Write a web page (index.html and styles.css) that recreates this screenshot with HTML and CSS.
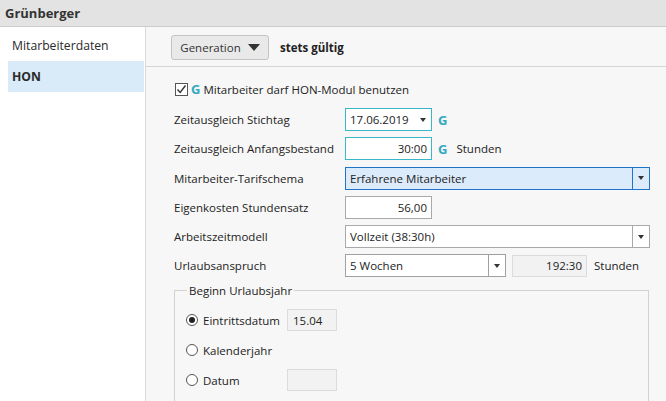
FILE: index.html
```html
<!DOCTYPE html>
<html lang="de">
<head>
<meta charset="utf-8">
<title>Grünberger</title>
<link rel="stylesheet" href="styles.css">
</head>
<body>
<div class="titlebar">Grünberger</div>
<div class="main">
  <nav class="sidebar">
    <div class="nav-item">Mitarbeiterdaten</div>
    <div class="nav-item active">HON</div>
  </nav>
  <section class="content">
    <div class="toolbar">
      <button class="gen-btn">Generation <span class="tri-big"></span></button>
      <span class="validity">stets gültig</span>
    </div>
    <div class="form">
      <div class="check-row">
        <span class="checkbox"><svg width="11" height="11" viewBox="0 0 11 11"><path d="M1.5 5.5 L4.2 8.5 L9.5 1.5" fill="none" stroke="#333" stroke-width="1.4"/></svg></span>
        <span class="g">G</span>
        <span>Mitarbeiter darf HON-Modul benutzen</span>
      </div>
      <div class="grid">
        <label class="lbl">Zeitausgleich Stichtag</label>
        <div class="ctl">
          <div class="box teal w86 date"><span>17.06.2019</span><span class="tri-sm"></span></div>
          <span class="g">G</span>
        </div>
        <label class="lbl">Zeitausgleich Anfangsbestand</label>
        <div class="ctl">
          <div class="box teal w86 right">30:00</div>
          <span class="g">G</span>
          <span class="unit">Stunden</span>
        </div>
        <label class="lbl">Mitarbeiter-Tarifschema</label>
        <div class="ctl">
          <div class="box select selected wfull"><span class="val">Erfahrene Mitarbeiter</span><span class="arrow"><span class="tri-sm"></span></span></div>
        </div>
        <label class="lbl">Eigenkosten Stundensatz</label>
        <div class="ctl">
          <div class="box w86 right">56,00</div>
        </div>
        <label class="lbl">Arbeitszeitmodell</label>
        <div class="ctl">
          <div class="box select wfull"><span class="val">Vollzeit (38:30h)</span><span class="arrow"><span class="tri-sm"></span></span></div>
        </div>
        <label class="lbl">Urlaubsanspruch</label>
        <div class="ctl">
          <div class="box select dark w161"><span class="val">5 Wochen</span><span class="arrow"><span class="tri-sm"></span></span></div>
          <div class="box ro w75 right">192:30</div>
          <span class="unit2">Stunden</span>
        </div>
      </div>
      <fieldset class="group">
        <legend>Beginn Urlaubsjahr</legend>
        <div class="radio-row">
          <span class="radio on"></span><span class="rlabel">Eintrittsdatum</span>
          <div class="box ro small">15.04</div>
        </div>
        <div class="radio-row">
          <span class="radio"></span><span class="rlabel">Kalenderjahr</span>
        </div>
        <div class="radio-row">
          <span class="radio"></span><span class="rlabel">Datum</span>
          <div class="box ro small"></div>
        </div>
      </fieldset>
    </div>
  </section>
</div>
</body>
</html>
```
FILE: styles.css
```css
* { box-sizing: border-box; }
html, body { margin: 0; padding: 0; }
body {
  width: 666px;
  height: 401px;
  overflow: hidden;
  background: #f7f7f7;
  font-family: "Open Sans", "Noto Sans", sans-serif;
  font-size: 11.5px;
  color: #222;
}
.titlebar {
  height: 27px;
  background: #e3e3e3;
  border-bottom: 1px solid #cccccc;
  font-weight: 700;
  font-size: 13px;
  color: #333;
  padding-left: 5px;
  line-height: 26px;
}
.main { display: flex; height: 374px; }
.sidebar {
  width: 146px;
  background: #fff;
  border-right: 1px solid #dadada;
  flex: none;
}
.nav-item {
  font-size: 12.2px;
  color: #2a2a2a;
  padding-left: 12px;
  height: 34px;
  line-height: 38px;
}
.nav-item.active {
  margin-left: 8px;
  width: 136px;
  padding-left: 4px;
  height: 31px;
  line-height: 31px;
  background: #d9ebf8;
  font-weight: 700;
}
.content { flex: 1; }
.toolbar {
  height: 40px;
  border-bottom: 1px solid #d6d6d6;
  display: flex;
  align-items: center;
  padding-left: 25px;
  padding-top: 1px;
  gap: 11px;
}
.gen-btn {
  width: 98px;
  height: 25px;
  background: #e9e9e9;
  border: 1px solid #c4c4c4;
  border-radius: 3px;
  font: inherit;
  color: #333;
  display: flex;
  align-items: center;
  justify-content: center;
  gap: 7px;
  padding: 0;
}
.tri-big {
  width: 0; height: 0;
  border-left: 6px solid transparent;
  border-right: 6px solid transparent;
  border-top: 7px solid #333;
}
.validity { font-weight: 700; color: #222; }
.form { padding-left: 28px; padding-right: 15px; }
.check-row {
  display: flex;
  align-items: center;
  height: 30px;
  margin-top: 7px;
  padding-left: 1px;
}
.checkbox {
  width: 13px; height: 13px;
  border: 1px solid #555;
  background: #fff;
  display: inline-flex;
  align-items: center;
  justify-content: center;
  margin-right: 3px;
}
.g {
  color: #33a9c2;
  font-weight: 700;
  font-size: 13px;
  margin-right: 3px;
}
.grid {
  display: grid;
  grid-template-columns: 171px 1fr;
  grid-auto-rows: 23px;
  row-gap: 6.3px;
  align-items: center;
  margin-top: 4px;
}
.lbl { color: #222; }
.ctl { display: flex; align-items: center; height: 23px; }
.box {
  height: 23px;
  border: 1px solid #a9a9a9;
  background: #fff;
  display: flex;
  align-items: center;
  padding: 0 4px;
}
.box.right { justify-content: flex-end; }
.w86 { width: 87px; }
.w161 { width: 161px; }
.w75 { width: 75px; }
.wfull { width: 305px; }
.teal { border-color: #3ab6c9; }
.date { justify-content: space-between; padding-right: 5px; }
.ctl .g { margin-left: 6px; }
.unit { margin-left: 6px; }
.unit2 { margin-left: 7px; }
.tri-sm {
  width: 0; height: 0;
  border-left: 3.5px solid transparent;
  border-right: 3.5px solid transparent;
  border-top: 4px solid #333;
}
.select { padding: 0 0 0 4px; }
.select .val { flex: 1; }
.select .arrow {
  width: 17px;
  height: 100%;
  border-left: 1px solid #a9a9a9;
  display: flex;
  align-items: center;
  justify-content: center;
}
.selected { background: #dcebfb; border-color: #1f74c8; }
.selected .arrow { border-left-color: #1f74c8; }
.dark, .dark .arrow { border-color: #a0a0a0; }
.ro {
  background: #f2f2f2;
  border-color: #dcdcdc;
  margin-left: 6px;
  height: 22px;
}
.group {
  margin: 6px 0 0 0;
  width: 475px;
  border: 1px solid #d2d2d2;
  padding: 7px 0 0 11px;
  height: 130px;
}
.group legend { padding: 0 2px; margin-left: 1px; color: #222; }
.radio-row {
  display: flex;
  align-items: center;
  height: 30px;
}
.radio {
  width: 12px; height: 12px;
  border-radius: 50%;
  border: 1px solid #555;
  background: #fff;
  position: relative;
  margin-right: 5px;
}
.radio.on::after {
  content: "";
  position: absolute;
  left: 2px; top: 2px;
  width: 6px; height: 6px;
  border-radius: 50%;
  background: #222;
}
.rlabel { width: 84px; }
.small { width: 50px; margin-left: 0; padding-left: 5px; }
```
